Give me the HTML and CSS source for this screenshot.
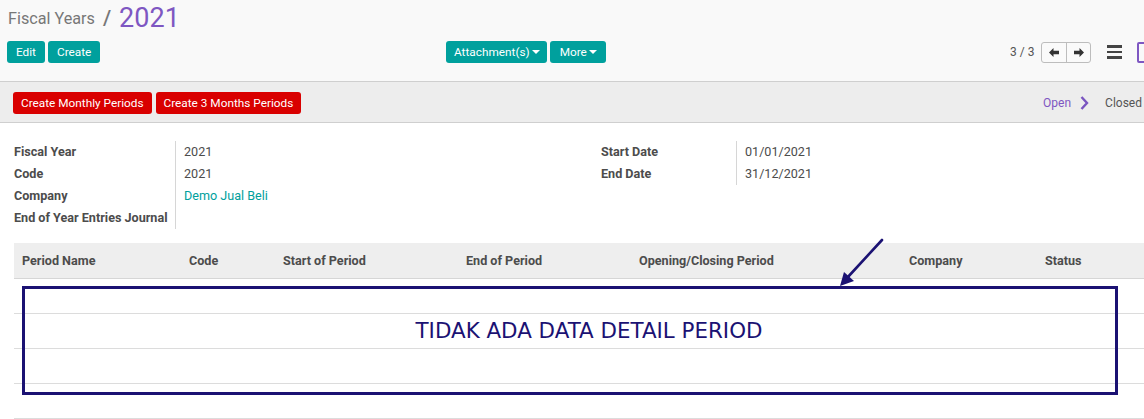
FILE: index.html
```html
<!DOCTYPE html>
<html>
<head>
<meta charset="utf-8">
<link rel="stylesheet" href="styles.css">
</head>
<body>
<div class="page">
  <div class="cp">
    <div class="bc">
      <span class="bc-parent">Fiscal Years</span>
      <span class="bc-sep">/</span>
      <span class="bc-cur">2021</span>
    </div>
    <div class="cp-bottom">
      <div class="cp-left">
        <button class="btn btn-teal btn-main">Edit</button>
        <button class="btn btn-teal btn-main">Create</button>
      </div>
      <div class="cp-mid">
        <button class="btn btn-teal btn-dd">Attachment(s) <span class="caret"></span></button>
        <button class="btn btn-teal btn-dd btn-more">More <span class="caret"></span></button>
      </div>
      <div class="cp-right">
        <span class="pager-val">3 / 3</span>
        <div class="pager-btns">
          <span class="pbtn"><svg width="10" height="9" viewBox="0 0 10 9"><path d="M0 4.5 L4.5 0 L4.5 2.8 L10 2.8 L10 6.2 L4.5 6.2 L4.5 9 Z" fill="#333"/></svg></span>
          <span class="pbtn"><svg width="10" height="9" viewBox="0 0 10 9"><path d="M10 4.5 L5.5 0 L5.5 2.8 L0 2.8 L0 6.2 L5.5 6.2 L5.5 9 Z" fill="#333"/></svg></span>
        </div>
        <span class="burger"><i></i><i></i><i></i></span>
        <span class="pbox"></span>
      </div>
    </div>
  </div>

  <div class="sb">
    <div class="sb-left">
      <button class="btn btn-red">Create Monthly Periods</button>
      <button class="btn btn-red">Create 3 Months Periods</button>
    </div>
    <div class="sb-right">
      <span class="st-open">Open</span>
      <svg class="chev" width="9" height="14" viewBox="0 0 9 14"><path d="M1.5 1 L7 7 L1.5 13" fill="none" stroke="#7a55c0" stroke-width="2.4"/></svg>
      <span class="st-closed">Closed</span>
    </div>
  </div>

  <div class="sheet">
    <div class="groups">
      <div class="group">
        <div class="labels lbl-left">
          <div class="row lbl">Fiscal Year</div>
          <div class="row lbl">Code</div>
          <div class="row lbl">Company</div>
          <div class="row lbl">End of Year Entries Journal</div>
        </div>
        <div class="vals">
          <div class="row">2021</div>
          <div class="row">2021</div>
          <div class="row link">Demo Jual Beli</div>
          <div class="row"></div>
        </div>
      </div>
      <div class="group group-r">
        <div class="labels lbl-right">
          <div class="row lbl">Start Date</div>
          <div class="row lbl">End Date</div>
        </div>
        <div class="vals">
          <div class="row">01/01/2021</div>
          <div class="row">31/12/2021</div>
        </div>
      </div>
    </div>

    <div class="table">
      <div class="thead">
        <span class="th c1">Period Name</span>
        <span class="th c2">Code</span>
        <span class="th c3">Start of Period</span>
        <span class="th c4">End of Period</span>
        <span class="th c5">Opening/Closing Period</span>
        <span class="th c6">Company</span>
        <span class="th c7">Status</span>
      </div>
      <div class="tr"></div>
      <div class="tr"></div>
      <div class="tr"></div>
      <div class="tr"></div>
    </div>
  </div>

  <div class="note">TIDAK ADA DATA DETAIL PERIOD</div>
  <svg class="arrow" width="60" height="60" viewBox="0 0 60 60">
    <line x1="50" y1="4" x2="15" y2="42" stroke="#1b1273" stroke-width="2.6" stroke-linecap="round"/>
    <path d="M8 50 L12 36 L22 45 Z" fill="#1b1273"/>
  </svg>
</div>
</body>
</html>
```
FILE: styles.css
```css
* { box-sizing: border-box; }
html, body { margin: 0; padding: 0; }
body {
  width: 1144px;
  height: 419px;
  overflow: hidden;
  background: #fff;
  font-family: Roboto, "Noto Sans", sans-serif;
  font-size: 12.6px;
  color: #4c4c4c;
}
.page { position: relative; width: 1144px; height: 419px; overflow: hidden; }

.cp {
  height: 82px;
  background: #f9f9f9;
  border-bottom: 1px solid #cfcfcf;
  padding: 0 0 0 7px;
}
.bc {
  display: flex;
  align-items: center;
  height: 36px;
  padding-left: 1px;
  margin-bottom: 5px;
}
.bc-parent { font-size: 16.2px; color: #777; }
.bc-sep { font-size: 21px; color: #777; margin: 0 8px 0 8px; font-weight: 500; }
.bc-cur { font-size: 27px; color: #7e57c2; }

.cp-bottom { display: flex; align-items: flex-start; height: 40px; }
.cp-left { display: flex; gap: 3px; width: 439px; flex-shrink: 0; }
.cp-mid { display: flex; gap: 3px; width: 564px; flex-shrink: 0; }
.cp-right { display: flex; align-items: center; height: 22px; flex-shrink: 0; }

.btn {
  font-family: Roboto, "Noto Sans", sans-serif;
  font-size: 11.8px;
  height: 22px;
  line-height: 22px;
  padding: 0 8px;
  border: none;
  border-radius: 3px;
  color: #fff;
  cursor: pointer;
  display: inline-flex;
  align-items: center;
  gap: 3px;
  white-space: nowrap;
}
.btn-teal { background: #00a09d; }
.btn-main { padding: 0 9px; }
.btn-dd { gap: 2px; padding: 0 7px 0 8px; }
.btn-more { padding: 0 9px 0 10px; }
.btn-red { background: #d90000; padding: 0 8px; }
.caret {
  display: inline-block;
  width: 0; height: 0;
  border-left: 4px solid transparent;
  border-right: 4px solid transparent;
  border-top: 4px solid #fff;
}

.pager-val { font-size: 12px; color: #555; margin-right: 7px; white-space: nowrap; }
.pager-btns {
  display: flex;
  border: 1px solid #bdbdbd;
  border-radius: 3px;
  background: #fafafa;
  height: 21px;
}
.pbtn { width: 24px; display: flex; align-items: center; justify-content: center; }
.pbtn + .pbtn { border-left: 1px solid #bdbdbd; }
.burger { display: flex; flex-direction: column; gap: 3px; margin-left: 16px; width: 15px; }
.burger i { display: block; height: 2.5px; background: #444; }
.pbox {
  width: 14px; height: 21px;
  border: 2px solid #7e57c2;
  border-radius: 2px;
  margin-left: 15px;
}

.sb {
  height: 41px;
  background: #ededed;
  border-bottom: 1px solid #cfcfcf;
  display: flex;
  align-items: center;
  justify-content: space-between;
  padding-left: 13px;
  padding-top: 2px;
}
.sb-left { display: flex; gap: 4px; }
.sb-right { display: flex; align-items: center; margin-right: 2px; font-size: 12px; }
.st-open { color: #7e57c2; }
.chev { margin: 0 16px 0 9px; }
.st-closed { color: #555; }

.sheet { padding: 18px 0 0 14px; }
.groups { display: flex; align-items: flex-start; }
.group { display: flex; width: 587px; flex-shrink: 0; }
.labels { border-right: 1px solid #d6d6d6; }
.lbl-left { width: 162px; }
.lbl-right { width: 136px; }
.row { height: 22px; line-height: 22px; white-space: nowrap; }
.lbl { font-weight: 700; color: #4c4c4c; }
.vals { padding-left: 8px; }
.link { color: #00a09d; }

.table { margin-top: 14px; }
.thead {
  position: relative;
  height: 36px;
  background: #eee;
  border-bottom: 1px solid #d6d6d6;
  display: flex;
  align-items: center;
}
.th { font-weight: 700; position: absolute; }
.c1 { left: 8px; }
.c2 { left: 175px; }
.c3 { left: 269px; }
.c4 { left: 452px; }
.c5 { left: 625px; }
.c6 { left: 895px; }
.c7 { left: 1031px; }
.tr { height: 35px; border-bottom: 1px solid #dcdcdc; }

.note {
  position: absolute;
  left: 22px;
  top: 286px;
  width: 1096px;
  height: 109px;
  border: 3px solid #1b1273;
  color: #1b1273;
  font-family: "DejaVu Sans", sans-serif;
  font-size: 21.4px;
  display: flex;
  align-items: center;
  justify-content: center;
  padding-left: 38px;
  padding-bottom: 20px;
}
.arrow { position: absolute; left: 832px; top: 236px; }
```
